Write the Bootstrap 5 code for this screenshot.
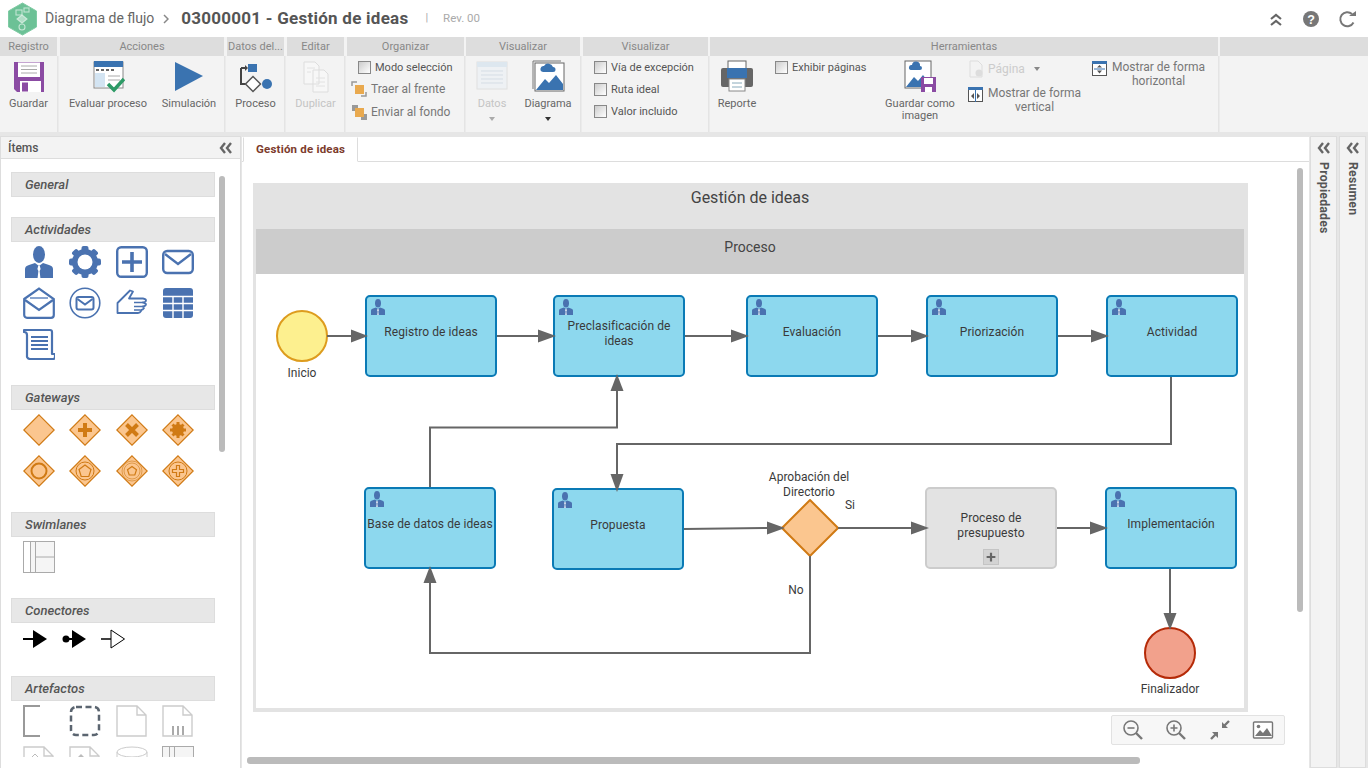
<!DOCTYPE html>
<html lang="es">
<head>
<meta charset="utf-8">
<title>Diagrama de flujo</title>
<link href="https://cdn.jsdelivr.net/npm/bootstrap@5.3.0/dist/css/bootstrap.min.css" rel="stylesheet">
<style>
html,body{height:100%;overflow:hidden}
body{font-family:Roboto,"Liberation Sans",sans-serif;font-size:11px;color:#666;background:#e6e6e6;width:1368px;height:768px}
.topbar{height:37px;background:#fff;padding-left:7px}
.logo-hex{width:31px;height:34px;margin-right:7px}
.crumb{font-size:14px;color:#666}
.crumb-sep{margin:0 12px 0 9px}
.doc-title{font-size:17px;font-weight:700;color:#555;letter-spacing:.25px}
.rev-sep{margin:0 15px 0 17px;color:#aaa}
.rev-text{font-size:11.5px;color:#aaa}
.top-tools{gap:18px;padding-right:10px}
.ribbon{height:99px;background:#f3f3f3;border-bottom:4px solid #e6e6e6}
.rb-group{margin-right:3px;flex:none}
.rb-head{height:19px;background:#ddd;text-align:center;line-height:19px;color:#888;font-size:11px;white-space:nowrap;overflow:hidden}
.rb-body{height:76px;padding-top:3px;box-shadow:1.5px 0 0 #e4e4e4}
.w57{width:57px}.w164{width:164px}.w117{width:117px}.w114{width:114px}.w125{width:125px}.w508{width:508px}.wrest{flex:1 1 auto;margin-right:0}
.rb-group.tight{margin-right:2px}
.wrest .rb-body{box-shadow:none}
.big-btn{display:flex;flex-direction:column;align-items:center;text-align:center;line-height:12px;color:#666;flex:none}
.big-btn svg{width:34px;height:34px;margin-bottom:5px}
.big-btn.off{color:#c4c4c4}
.caret-s{width:0;height:0;border:3.5px solid transparent;border-top:4px solid #333;margin-top:7px}
.caret-s.off{border-top-color:#aaa}
.b-guardar{width:57px}.b-eval{width:92px;margin-left:2px}.b-sim{width:70px}.b-one{width:57px}.b-datos{width:50px;margin-left:1px}.b-diag{width:60px;margin-left:1px}.b-rep{width:54px}
.b-img{width:92px;margin-left:-6px}
.chk-col{display:flex;flex-direction:column;gap:9px;padding-top:2px;line-height:13px}
.chk-row{display:flex;align-items:center;gap:4px;color:#555;white-space:nowrap}
.chk-row .form-check-input{width:13px;height:13px;margin:0;border:1px solid #888;border-radius:0;background:linear-gradient(135deg,#ccc,#fff);flex:none}
.org-col{padding-left:4px;gap:7px;padding-top:5px}
.org-row{display:flex;align-items:center;gap:4px;font-size:12px;color:#777;white-space:nowrap;line-height:16px}
.org-row svg{width:16px;height:16px}
.org-first{padding-left:7px}
.org-first .chk-row{gap:4px}
.vis-col{padding-left:11px;padding-top:5px}
.exh{margin-left:11px;width:105px}
.pg-col{width:125px;flex:none;padding-top:1px;margin-left:2px}
.pg-row{display:flex;align-items:center;gap:4px;color:#ccc;font-size:12px;line-height:16px;margin-bottom:8px}
.pg-row svg{width:16px;height:18px}
.caret-g{width:0;height:0;border:3px solid transparent;border-top:4px solid #888;margin:3px 0 0 5px}
.view-row{display:flex;gap:5px;font-size:12px;color:#777;line-height:14px;text-align:center;width:113px;flex:none}
.view-row svg{width:15px;height:15px;flex:none;margin-top:1px}
.view-row span{flex:none;white-space:nowrap}
.vw-h{margin-top:1px;margin-left:-1px}
.main-area{height:632px}
.left-panel{width:241px;background:#fff;border-right:1px solid #ddd;border-left:1px solid #ddd;flex:none;margin-right:1px;position:relative;overflow:hidden}
.left-head{height:23px;background:#f3f3f3;border-bottom:1px solid #ddd;border-top:1px solid #ddd;padding:0 7px;font-size:12px;font-weight:500;color:#555}
.items-scroll{height:598px;overflow:hidden;padding:13px 0 0 10px}
.sect-bar{width:204px;height:25px;background:#e7e7e7;border:1px solid #ddd;padding-left:13px;font-style:italic;font-weight:500;font-size:13px;line-height:23px;color:#555}
.icon-grid{display:flex;flex-wrap:wrap;width:195px;padding:4px 0 0 12px;column-gap:14.3px;row-gap:9px}
.icon-grid svg{width:32px;height:32px;display:block}
.icon-grid svg.cnx{width:24.500px}
.mb-a{margin-bottom:20px}.mb-g{margin-bottom:25px}.mb-b{margin-bottom:25px}.mb-c{margin-bottom:25px}.mb-d{margin-bottom:17px}
.v-thumb{position:absolute;width:6px;background:#bbb;border-radius:3px}
.thumb-items{left:218px;top:40px;height:276px}
.h-thumb{position:absolute;height:7px;background:#bbb;border-radius:3px;left:5px;top:595px;width:893px}
.thumb-canvas{left:1055px;top:6px;height:444px}
.center-col{width:1067px;flex:none;background:#fff;border:0;position:relative;margin-top:1px}
.tabstrip{height:25px;border-bottom:1px solid #ddd;padding-left:1px}
.tabstrip .nav-link,.tabstrip .nav-link.active{height:25px;padding:0 12px;line-height:22px;font-size:11.500px;font-weight:700;letter-spacing:.2px;color:#7c3b2c;border:1px solid #ddd;border-bottom-color:#fff;border-top-color:#fff;border-radius:0;background:#fff;margin-bottom:-1px}
.canvas-wrap{position:relative;height:606px;overflow:hidden;padding:21px 0 0 11px}
.pool{width:995px;height:529px;background:#e3e3e3;padding:0 4px 4px 3px}
.pool-title{height:46px;text-align:center;font-size:16px;line-height:29px;color:#444}
.lane-title{height:45px;background:#ccc;text-align:center;font-size:14px;line-height:37px;color:#444}
.lane{position:relative;height:434px;background:#fff}
.wires{position:absolute;left:0;top:0;width:988px;height:434px;z-index:2}
.dnode{position:absolute;font-size:12px;line-height:15px;color:#3a3a3a;text-align:center}
.task{width:132px;height:82px;background:#8dd8ee;border:2px solid #0a7ab5;border-radius:5px;display:flex;align-items:center;justify-content:center;padding:0 0 8px;letter-spacing:.08px}
.task.two{padding:0 4px 4px}
.task svg.who{position:absolute;left:3px;top:1px;width:16px;height:18px}
.task.sub{background:#e3e3e3;border-color:#ccc}
.sub-plus{position:absolute;left:56px;bottom:2px;width:16px;height:16px;background:#d3d3d3;border:1px solid #c4c4c4;color:#666}
.n-reg{left:109px;top:21px}.n-pre{left:297px;top:21px}.n-eva{left:490px;top:21px}.n-pri{left:670px;top:21px}.n-act{left:850px;top:21px}
.n-bas{left:108px;top:213px}.n-pro{left:296px;top:214px}.n-pre2{left:669px;top:213px}.n-imp{left:849px;top:213px}
.evt{width:52px;height:52px;border-radius:50%;border:2px solid #dd9c1e;background:#fdf08f}
.evt.end{background:#f2a18c;border-color:#b52a08}
.n-ini{left:20px;top:36px}.n-fin{left:888px;top:353px}
.lbl{white-space:nowrap;transform:translateX(-50%)}
.l-ini{left:46px;top:92px}.l-apr{left:553px;top:196px}.l-si{left:594px;top:224px}.l-no{left:540px;top:309px}.l-fin{left:914px;top:408px}
.gw{left:525px;top:225px;width:58px;height:58px}
.zoom-bar{position:absolute;left:869px;top:553px;width:174px;height:30px;background:#f7f7f7;border:1px solid #e2e2e2;border-radius:2px;padding:0 10px;z-index:3}
.zoom-bar svg{width:22px;height:22px}
.side-tab{width:27px;background:#f3f3f3;border:1px solid #ddd;flex:none;padding-top:5px;margin-left:1px;margin-top:0}
.side-tab svg{width:14px;height:12px}
.side-text{writing-mode:vertical-rl;font-size:12.300px;font-weight:700;letter-spacing:.2px;color:#555;margin-top:8px;line-height:14px}
.side-gap{margin-left:2px}
</style>
</head>
<body>
<svg class="d-none" xmlns="http://www.w3.org/2000/svg">
  <symbol id="i-person" viewBox="0 0 32 32"><ellipse cx="16" cy="8.500" rx="6" ry="8.500" fill="#4a72b0"/><path d="M2 32V23q0-3 4-4l6-2 4 3 4-3 6 2q4 1 4 4v9z" fill="#4a72b0"/><path d="M15.200 20h1.600l.8 3-1 2 .8 7h-2.800l.8-7-1-2z" fill="#fff"/></symbol>
  <symbol id="i-gear" viewBox="0 0 32 32"><g fill="#4a72b0"><rect x="12.500" y="0" width="7" height="32" rx="2"/><rect x="12.500" y="0" width="7" height="32" rx="2" transform="rotate(45 16 16)"/><rect x="12.500" y="0" width="7" height="32" rx="2" transform="rotate(90 16 16)"/><rect x="12.500" y="0" width="7" height="32" rx="2" transform="rotate(135 16 16)"/><circle cx="16" cy="16" r="13"/></g><circle cx="16" cy="16" r="7.500" fill="#fff"/></symbol>
  <symbol id="i-plusbox" viewBox="0 0 32 32"><rect x="1.200" y="1.200" width="29.600" height="29.600" rx="4" fill="#fff" stroke="#4a72b0" stroke-width="2.400"/><path d="M6 16h20M16 6v20" stroke="#4a72b0" stroke-width="3.600"/></symbol>
  <symbol id="i-mail" viewBox="0 0 32 32"><rect x="1.200" y="5" width="29.600" height="22" rx="4" fill="#fff" stroke="#4a72b0" stroke-width="2.400"/><path d="M3 8l13 10L29 8" fill="none" stroke="#4a72b0" stroke-width="2.400"/></symbol>
  <symbol id="i-mailopen" viewBox="0 0 32 32"><path d="M1.200 12L16 1.500 30.800 12v16a2.800 2.800 0 0 1-2.800 2.800H4A2.800 2.800 0 0 1 1.200 28z" fill="#fff" stroke="#4a72b0" stroke-width="2.200"/><path d="M2 13l14 10 14-10" fill="none" stroke="#4a72b0" stroke-width="2.200"/><path d="M7 11h18" stroke="#8aa5cf" stroke-width="2"/></symbol>
  <symbol id="i-mailc" viewBox="0 0 32 32"><circle cx="16" cy="16" r="14.800" fill="#fff" stroke="#4a72b0" stroke-width="1.600"/><rect x="7.500" y="10" width="17" height="12.500" rx="2" fill="#fff" stroke="#4a72b0" stroke-width="2"/><path d="M8.500 12l7.500 5.500 7.500-5.500" fill="none" stroke="#4a72b0" stroke-width="2"/></symbol>
  <symbol id="i-hand" viewBox="0 0 32 32"><path d="M1.500 16L14 3.500l3 1-4 7h14q3 .5 3 2t-3 2l3 1.500q0 2-3 2.500l1 1.500q-1 2-3 2l0 1q-1 2-3 2H9L5 26H1.500z" fill="#fff" stroke="#4a72b0" stroke-width="1.800" stroke-linejoin="round"/><path d="M18 15.500h9M18 19.500h9M18 23h6" stroke="#4a72b0" stroke-width="1.600"/></symbol>
  <symbol id="i-table" viewBox="0 0 32 32"><rect x="1" y="1" width="30" height="30" rx="3" fill="#4a72b0"/><path d="M1 9.500h30M1 16.500h30M1 23.500h30M11 9v22M21 9v22" stroke="#fff" stroke-width="1.400"/></symbol>
  <symbol id="i-scroll" viewBox="0 0 32 32"><path d="M1 2h26a2 2 0 0 1 2 2v22h3v3a2 2 0 0 1-2 2H7q-2 0-3-2V7Q4 4 1 4z" fill="#fff" stroke="#4a72b0" stroke-width="2.200" stroke-linejoin="round"/><path d="M8 9h17M8 13h17M8 17h17M8 21h17" stroke="#4a72b0" stroke-width="2"/></symbol>
  <symbol id="i-gw" viewBox="0 0 32 32"><path d="M16 .8L31.200 16 16 31.200.8 16z" fill="#fbc68f" stroke="#d07a14" stroke-width="1.200"/></symbol>
  <symbol id="i-chev" viewBox="0 0 14 12"><path d="M6 1L2 6l4 5M12 1L8 6l4 5" fill="none" stroke="#666" stroke-width="2.400"/></symbol>
  <symbol id="i-mag" viewBox="0 0 22 22"><circle cx="9" cy="9" r="7" fill="none" stroke="#777" stroke-width="1.600"/><path d="M14 14l6 6" stroke="#777" stroke-width="2.400"/></symbol>
  <symbol id="i-floppy" viewBox="0 0 34 34"><path d="M2 3h30v30H5l-3-3z" fill="#8b4ba3"/><rect x="6" y="3.500" width="22" height="14.500" fill="#fff"/><path d="M9 7h16M9 10.500h16M9 14h16" stroke="#aaa"/><rect x="8" y="22" width="21" height="11" fill="#fff"/><rect x="10" y="23.500" width="6" height="9" fill="#8b4ba3"/></symbol>
</svg>

<header class="topbar d-flex align-items-center">
  <svg class="logo-hex" viewBox="0 0 31 34"><path d="M15.500 1L29.500 9v16L15.500 33 1.500 25V9z" fill="#6cc196" stroke="#7fcba4" stroke-linejoin="round"/><g fill="none" stroke="#dff2e8" stroke-opacity=".75" stroke-width="1.100"><rect x="9" y="8" width="6" height="5"/><rect x="17" y="6" width="5" height="4"/><circle cx="15" cy="25" r="3"/><path d="M15 13l5 4-5 4-5-4z" fill="#dff2e8" fill-opacity=".6"/></g></svg>
  <span class="crumb">Diagrama de flujo</span>
  <svg class="crumb-sep" width="6" height="10" viewBox="0 0 6 10"><path d="M1 1l4 4-4 4" fill="none" stroke="#888" stroke-width="1.500"/></svg>
  <span class="doc-title">03000001 - Gestión de ideas</span>
  <span class="rev-sep">|</span>
  <span class="rev-text">Rev. 00</span>
  <div class="ms-auto d-flex align-items-center top-tools">
    <svg width="16" height="16" viewBox="0 0 16 16"><path d="M3 8l5-4 5 4M3 14l5-4 5 4" fill="none" stroke="#666" stroke-width="2.200"/></svg>
    <svg width="18" height="18" viewBox="0 0 18 18"><circle cx="9" cy="9" r="8" fill="#777"/><text x="9" y="13.500" text-anchor="middle" font-size="12.500" font-weight="700" fill="#fff" font-family="Liberation Sans">?</text></svg>
    <svg width="20" height="18" viewBox="0 0 20 18"><path d="M15.500 12.500A7 7 0 1 1 14 4" fill="none" stroke="#777" stroke-width="2"/><path d="M11 6h7V1z" fill="#777"/></svg>
  </div>
</header>

<section class="ribbon d-flex">
  <div class="rb-group w57"><div class="rb-head">Registro</div>
    <div class="rb-body d-flex"><div class="big-btn b-guardar"><svg><use href="#i-floppy"/></svg>Guardar</div></div></div>
  <div class="rb-group w164"><div class="rb-head">Acciones</div>
    <div class="rb-body d-flex">
      <div class="big-btn b-eval"><svg viewBox="0 0 34 34"><rect x="3" y="3" width="29" height="26" fill="#fff" stroke="#888"/><rect x="3" y="2" width="29" height="6" fill="#3a73b0"/><path d="M5 11h3M10 11h3M15 11h3M20 11h3" stroke="#666" stroke-width="2"/><rect x="4" y="14" width="10" height="14" fill="#d3e4f2"/><path d="M17 17h12M17 21h12" stroke="#aaa"/><path d="M17 25l6 6 10-11" fill="none" stroke="#2d9a66" stroke-width="3.500"/></svg>Evaluar proceso</div>
      <div class="big-btn b-sim"><svg viewBox="0 0 34 34"><path d="M3 3l28 14L3 32z" fill="#3a73b0"/></svg>Simulación</div>
    </div></div>
  <div class="rb-group w57"><div class="rb-head">Datos del...</div>
    <div class="rb-body d-flex"><div class="big-btn b-one"><svg viewBox="0 0 34 34"><path d="M2 9v16h6M2 9h5" fill="none" stroke="#444" stroke-width="2"/><path d="M6 6l3 3-3 3z" fill="#444"/><rect x="9" y="5" width="9" height="8" fill="#3a73b0"/><path d="M14 17.500L21.500 25 14 32.500 6.500 25z" fill="#fff" stroke="#555" stroke-width="1.500"/><circle cx="28" cy="25" r="5" fill="#3a73b0"/></svg>Proceso</div></div></div>
  <div class="rb-group w57"><div class="rb-head">Editar</div>
    <div class="rb-body d-flex"><div class="big-btn b-one off"><svg viewBox="0 0 34 34"><path d="M5 3h11l4 4v18H5zM14 11h11l4 4v18H14z" fill="#f7f7f7" stroke="#ddd"/><path d="M8 9h8M8 13h4M17 19h9M17 23h9M17 27h9" stroke="#e2e2e2"/></svg>Duplicar</div></div></div>
  <div class="rb-group w117 tight"><div class="rb-head">Organizar</div>
    <div class="rb-body d-flex flex-column chk-col org-col">
      <div class="org-first"><label class="chk-row"><input class="form-check-input" type="checkbox">Modo selección</label></div>
      <div class="org-row"><svg viewBox="0 0 16 16"><path d="M1 5V1h5M15 11v4h-5" fill="none" stroke="#999" stroke-width="1.500"/><rect x="4" y="4" width="9" height="9" fill="#e9a94e"/></svg>Traer al frente</div>
      <div class="org-row"><svg viewBox="0 0 16 16"><rect x="1" y="1" width="6" height="6" fill="#999"/><rect x="10" y="10" width="6" height="6" fill="#999"/><rect x="4" y="4" width="9" height="9" fill="#e9a94e"/></svg>Enviar al fondo</div>
    </div></div>
  <div class="rb-group w114"><div class="rb-head">Visualizar</div>
    <div class="rb-body d-flex">
      <div class="big-btn b-datos off"><svg viewBox="0 0 34 34"><rect x="2" y="3" width="30" height="27" fill="#eef1f4" stroke="#e0e0e0"/><rect x="2" y="3" width="30" height="5" fill="#dde7ef"/><path d="M6 12h22M6 16h22M6 20h22M6 24h22" stroke="#d5dde5"/></svg>Datos<span class="caret-s off"></span></div>
      <div class="big-btn b-diag"><svg viewBox="0 0 34 34"><path d="M2 30V2h28" fill="none" stroke="#777"/><rect x="4" y="4" width="29" height="28" fill="#fff" stroke="#666"/><path d="M5 31l9-11 4 4 7-8 7 9v6z" fill="#3a73b0"/><path d="M12 13a3 3 0 0 1 1-6 5 5 0 0 1 9 1 2.500 2.500 0 0 1 0 5z" fill="#3a73b0"/></svg>Diagrama<span class="caret-s"></span></div>
    </div></div>
  <div class="rb-group w125 tight"><div class="rb-head">Visualizar</div>
    <div class="rb-body chk-col vis-col">
      <label class="chk-row"><input class="form-check-input" type="checkbox">Vía de excepción</label>
      <label class="chk-row"><input class="form-check-input" type="checkbox">Ruta ideal</label>
      <label class="chk-row"><input class="form-check-input" type="checkbox">Valor incluido</label>
    </div></div>
  <div class="rb-group w508 tight"><div class="rb-head">Herramientas</div>
    <div class="rb-body d-flex">
      <div class="big-btn b-rep"><svg viewBox="0 0 34 34"><rect x="8" y="2" width="18" height="10" fill="#fff" stroke="#666"/><rect x="1" y="9" width="32" height="19" rx="2" fill="#666"/><rect x="7" y="9" width="20" height="10" fill="#3a73b0"/><rect x="9" y="20" width="16" height="12" fill="#fff" stroke="#888"/><path d="M12 24h10M12 28h10" stroke="#8ab"/></svg>Reporte</div>
      <div class="chk-col exh"><label class="chk-row"><input class="form-check-input" type="checkbox">Exhibir páginas</label></div>
      <div class="big-btn b-img"><svg viewBox="0 0 34 34"><rect x="2" y="2" width="26" height="27" fill="#fff" stroke="#666"/><path d="M3 28l8-10 4 4 5-6 7 9v3z" fill="#3a73b0"/><path d="M8 11a2.500 2.500 0 0 1 1-5 4 4 0 0 1 8 1 2 2 0 0 1 0 4z" fill="#3a73b0"/><rect x="18" y="18" width="15" height="15" fill="#8b4ba3"/><rect x="21" y="19" width="9" height="6" fill="#fff"/><rect x="22" y="28" width="7" height="5" fill="#fff"/></svg>Guardar como<br>imagen</div>
      <div class="pg-col">
        <div class="pg-row"><svg viewBox="0 0 16 18"><path d="M2 1h8l4 4v12H2z" fill="none" stroke="#ddd"/><circle cx="11" cy="13" r="3.500" fill="#ddd"/></svg>Página<span class="caret-g"></span></div>
        <div class="view-row"><svg viewBox="0 0 15 15"><rect x=".5" y=".5" width="14" height="14" fill="#fff" stroke="#555"/><rect x="0" y="0" width="15" height="3" fill="#3a73b0"/><path d="M7.500 3v12" stroke="#3a73b0"/><path d="M6 6v6L3 9zM9 6v6l3-3z" fill="#555"/></svg><span>Mostrar de forma<br>vertical</span></div>
      </div>
      <div class="view-row vw-h"><svg viewBox="0 0 15 15"><rect x=".5" y=".5" width="14" height="14" fill="#fff" stroke="#555"/><rect x="0" y="0" width="15" height="3" fill="#3a73b0"/><path d="M2 8h11" stroke="#3a73b0"/><path d="M5 6.500h5L7.500 4zM5 9.500h5L7.500 12.500z" fill="#555"/></svg><span>Mostrar de forma<br>horizontal</span></div>
    </div></div>
  <div class="rb-group wrest"><div class="rb-head">&nbsp;</div><div class="rb-body"></div></div>
</section>

<main class="main-area d-flex">
  <aside class="left-panel">
    <div class="left-head d-flex align-items-center justify-content-between"><span>Ítems</span><svg width="14" height="12"><use href="#i-chev"/></svg></div>
    <div class="items-scroll">
      <div class="sect-bar mb-a">General</div>
      <div class="sect-bar">Actividades</div>
      <div class="icon-grid mb-g">
        <svg><use href="#i-person"/></svg><svg><use href="#i-gear"/></svg><svg><use href="#i-plusbox"/></svg><svg><use href="#i-mail"/></svg>
        <svg><use href="#i-mailopen"/></svg><svg><use href="#i-mailc"/></svg><svg><use href="#i-hand"/></svg><svg><use href="#i-table"/></svg>
        <svg><use href="#i-scroll"/></svg>
      </div>
      <div class="sect-bar">Gateways</div>
      <div class="icon-grid mb-b">
        <svg><use href="#i-gw"/></svg>
        <svg viewBox="0 0 32 32"><use href="#i-gw"/><path d="M9 16h14M16 9v14" stroke="#d07a14" stroke-width="4"/></svg>
        <svg viewBox="0 0 32 32"><use href="#i-gw"/><path d="M10.500 10.500l11 11M21.500 10.500l-11 11" stroke="#d07a14" stroke-width="4"/></svg>
        <svg viewBox="0 0 32 32"><use href="#i-gw"/><circle cx="16" cy="16" r="6" fill="#d07a14"/><path d="M16 8v16M8 16h16M10.500 10.500l11 11M21.500 10.500l-11 11" stroke="#d07a14" stroke-width="3"/></svg>
        <svg viewBox="0 0 32 32"><use href="#i-gw"/><circle cx="16" cy="16" r="7.500" fill="none" stroke="#d07a14" stroke-width="2"/></svg>
        <svg viewBox="0 0 32 32"><use href="#i-gw"/><circle cx="16" cy="16" r="9" fill="none" stroke="#d07a14"/><path d="M16 10l6 4.500-2.200 7h-7.600L10 14.500z" fill="none" stroke="#d07a14" stroke-width="1.200"/></svg>
        <svg viewBox="0 0 32 32"><use href="#i-gw"/><circle cx="16" cy="16" r="10" fill="none" stroke="#e09a4a"/><circle cx="16" cy="16" r="8" fill="none" stroke="#e09a4a"/><path d="M16 11.500l4.500 3.300-1.700 5.200h-5.600l-1.700-5.200z" fill="none" stroke="#d07a14" stroke-width="1.200"/></svg>
        <svg viewBox="0 0 32 32"><use href="#i-gw"/><circle cx="16" cy="16" r="9" fill="none" stroke="#d07a14"/><path d="M14.500 10.500h3v4h4v3h-4v4h-3v-4h-4v-3h4z" fill="none" stroke="#d07a14" stroke-width="1.200"/></svg>
      </div>
      <div class="sect-bar">Swimlanes</div>
      <div class="icon-grid mb-c">
        <svg viewBox="0 0 32 32"><rect x=".5" y=".5" width="31" height="31" fill="#f5f5f5" stroke="#aaa"/><rect x="1" y="1" width="6" height="30" fill="#fff"/><path d="M7.500 0v32M12.500 0v32M12.500 16h19.500" stroke="#aaa" fill="none"/></svg>
      </div>
      <div class="sect-bar">Conectores</div>
      <div class="icon-grid mb-d">
        <svg class="cnx" viewBox="0 0 24.500 32"><path d="M0 12h12" stroke="#000" stroke-width="2"/><path d="M10 3l14 9-14 9z"/></svg>
        <svg class="cnx" viewBox="0 0 24.500 32"><circle cx="4" cy="12" r="3.500"/><path d="M7 12h5" stroke="#000" stroke-width="2"/><path d="M10 3l14 9-14 9z"/></svg>
        <svg class="cnx" viewBox="0 0 24.500 32"><path d="M0 12h10" stroke="#000" stroke-width="1.500"/><path d="M10 3l13.500 9L10 21z" fill="#fff" stroke="#000"/></svg>
      </div>
      <div class="sect-bar">Artefactos</div>
      <div class="icon-grid">
        <svg viewBox="0 0 32 32"><path d="M17 1H1v30h16" fill="none" stroke="#999" stroke-width="2"/></svg>
        <svg viewBox="0 0 32 32"><rect x="2" y="2" width="28" height="28" rx="5" fill="none" stroke="#5b6570" stroke-width="2.500" stroke-dasharray="6 3.500"/></svg>
        <svg viewBox="0 0 32 32"><path d="M1 1h20l9 9v21H1zM21 1v9h9" fill="#fff" stroke="#ccc" stroke-width="1.400"/></svg>
        <svg viewBox="0 0 32 32"><path d="M1 1h20l9 9v21H1zM21 1v9h9" fill="#fff" stroke="#ccc" stroke-width="1.400"/><path d="M11 21v9M16 21v9M21 21v9" stroke="#aaa" stroke-width="2"/></svg>
        <svg viewBox="0 0 32 32"><path d="M1 1h20l9 9v21H1zM21 1v9h9" fill="#fff" stroke="#ccc" stroke-width="1.400"/><path d="M6 14l6-6 6 6v8H6z" fill="#fff" stroke="#bbb"/></svg>
        <svg viewBox="0 0 32 32"><path d="M1 1h20l9 9v21H1zM21 1v9h9" fill="#fff" stroke="#ccc" stroke-width="1.400"/><path d="M6 14l6-6 6 6v8H6z" fill="#bbb"/></svg>
        <svg viewBox="0 0 32 32"><ellipse cx="16" cy="6" rx="15" ry="5" fill="#fff" stroke="#ccc"/><path d="M1 6v20q15 8 30 0V6" fill="none" stroke="#ccc"/></svg>
        <svg viewBox="0 0 32 32"><rect x=".5" y=".5" width="31" height="31" fill="#f5f5f5" stroke="#aaa"/><path d="M7.500 0v32M12.500 0v32" stroke="#aaa"/></svg>
      </div>
    </div>
    <div class="v-thumb thumb-items"></div>
  </aside>

  <div class="center-col">
    <ul class="nav nav-tabs tabstrip">
      <li class="nav-item"><a class="nav-link active" href="#">Gestión de ideas</a></li>
    </ul>
    <div class="canvas-wrap">
      <div class="pool">
        <div class="pool-title">Gestión de ideas</div>
        <div class="lane-title">Proceso</div>
        <div class="lane">
          <svg class="wires" viewBox="256 274 988 434">
            <g fill="none" stroke="#666" stroke-width="2">
              <path d="M327 336H352M497 336H540M685 336H733M878 336H913M1058 336H1093"/>
              <path d="M430 487V427.500H617V388"/>
              <path d="M1171 377V444H617V478"/>
              <path d="M684 529L769 528M838 528H912M1057 528H1092"/>
              <path d="M1170 569V615"/>
              <path d="M810 556V653H430V582"/>
            </g>
            <g fill="#666">
              <path d="M351 329.500l17 6.500-17 6.500zM538 329.500l18 6.500-18 6.500zM731 329.500l18 6.500-18 6.500zM911 329.500l18 6.500-18 6.500zM1091 329.500l18 6.500-18 6.500z"/>
              <path d="M617 374l6.500 17h-13z"/>
              <path d="M617 492l6.500-18h-13z"/>
              <path d="M767 521.500l18 6.500-18 6.500zM911 521.500l18 6.500-18 6.500zM1090 521.500l18 6.500-18 6.500z"/>
              <path d="M1170 630l6.500-17h-13z"/>
              <path d="M430 566l6.500 17h-13z"/>
            </g>
          </svg>
          <div class="dnode evt n-ini"></div>
          <div class="dnode lbl l-ini">Inicio</div>
          <div class="dnode task n-reg"><svg class="who"><use href="#i-person"/></svg>Registro de ideas</div>
          <div class="dnode task two n-pre"><svg class="who"><use href="#i-person"/></svg>Preclasificación de ideas</div>
          <div class="dnode task n-eva"><svg class="who"><use href="#i-person"/></svg>Evaluación</div>
          <div class="dnode task n-pri"><svg class="who"><use href="#i-person"/></svg>Priorización</div>
          <div class="dnode task n-act"><svg class="who"><use href="#i-person"/></svg>Actividad</div>
          <div class="dnode task n-bas"><svg class="who"><use href="#i-person"/></svg>Base de datos de ideas</div>
          <div class="dnode task n-pro"><svg class="who"><use href="#i-person"/></svg>Propuesta</div>
          <svg class="dnode gw" viewBox="0 0 58 58"><path d="M29 1L57 29 29 57 1 29z" fill="#fbc68f" stroke="#d07a14" stroke-width="2"/></svg>
          <div class="dnode lbl l-apr">Aprobación del<br>Directorio</div>
          <div class="dnode lbl l-si">Si</div>
          <div class="dnode lbl l-no">No</div>
          <div class="dnode task two sub n-pre2"><span>Proceso de<br>presupuesto</span>
            <svg class="sub-plus" viewBox="0 0 16 16"><path d="M3 8h10M8 3v10" stroke="#666" stroke-width="2.500"/></svg></div>
          <div class="dnode task n-imp"><svg class="who"><use href="#i-person"/></svg>Implementación</div>
          <div class="dnode evt end n-fin"></div>
          <div class="dnode lbl l-fin">Finalizador</div>
        </div>
      </div>
      <div class="zoom-bar d-flex align-items-center justify-content-between">
        <svg viewBox="0 0 22 22"><use href="#i-mag"/><path d="M5.500 9h7" stroke="#777" stroke-width="1.600"/></svg>
        <svg viewBox="0 0 22 22"><use href="#i-mag"/><path d="M5.500 9h7M9 5.500v7" stroke="#777" stroke-width="1.600"/></svg>
        <svg viewBox="0 0 22 22"><path d="M13 9V3l6 6zM9 13v6l-6-6z" fill="#777"/><path d="M14 8l6-6M8 14l-6 6" stroke="#777" stroke-width="2.400"/></svg>
        <svg viewBox="0 0 22 22"><rect x="1.500" y="3" width="19" height="16" rx="1" fill="#fff" stroke="#777" stroke-width="1.400"/><circle cx="6.500" cy="7.500" r="1.800" fill="#777"/><path d="M3 17l5-6 3 3 4-5 5 8z" fill="#777"/></svg>
      </div>
      <div class="v-thumb thumb-canvas"></div>
      <div class="h-thumb"></div>
    </div>
  </div>

  <div class="side-tab d-flex flex-column align-items-center"><svg><use href="#i-chev"/></svg><span class="side-text">Propiedades</span></div>
  <div class="side-tab side-gap d-flex flex-column align-items-center"><svg><use href="#i-chev"/></svg><span class="side-text">Resumen</span></div>
</main>
<script src="https://cdn.jsdelivr.net/npm/bootstrap@5.3.0/dist/js/bootstrap.bundle.min.js"></script>
</body>
</html>
